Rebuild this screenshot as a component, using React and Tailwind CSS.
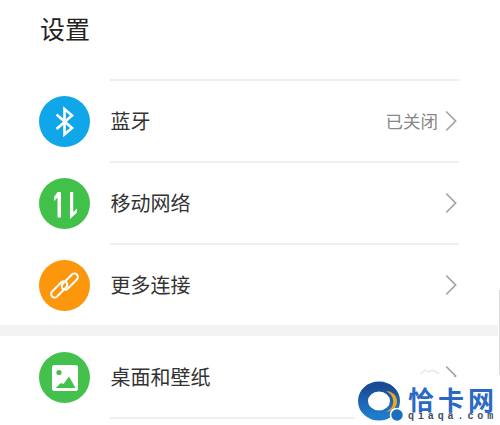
import React from "react";

const font = "font-['Noto_Sans_CJK_SC','Noto_Sans',sans-serif]";

function Chevron() {
  return (
    <svg width="12" height="22" viewBox="0 0 12 22" fill="none" stroke="#a3a3a3" strokeWidth="1.7" className="mr-[2px] -mt-[1px]">
      <path d="M1.2 1.5 L10.6 11 L1.2 20.5" />
    </svg>
  );
}

function Row({ color, icon, label, status, last, first }) {
  return (
    <div className={`flex ${first ? "h-[83px]" : "h-[82px]"}`}>
      <div className={`w-[110px] flex items-center pl-[39px] ${first ? "" : "pt-[2px]"}`}>
        <div className={`w-[51px] h-[51px] rounded-full flex items-center justify-center ${color}`}>
          {icon}
        </div>
      </div>
      <div className={`w-[349px] flex items-center pl-[0.5px] border-[#efefef] ${first ? "" : "border-t-2"} ${last ? "border-b-2" : ""}`}>
        <span className="text-[20px] leading-none text-[#333333]">{label}</span>
        <div className="ml-auto flex items-center text-[#888888]">
          {status}
          <Chevron />
        </div>
      </div>
    </div>
  );
}

function BluetoothIcon() {
  return (
    <svg width="51" height="51" viewBox="0 0 51 51" fill="none" stroke="white" strokeWidth="2.6">
      <path d="M17.5 18.5 L33 32 L25.5 38.5 V13 L33 19.5 L17.5 33" />
    </svg>
  );
}

function UpDown() {
  return (
    <svg width="51" height="51" viewBox="0 0 51 51" fill="white">
      <path d="M18.5 14 H22 V39.5 H18.5 V19.5 L15 23 V19 Z" />
      <path d="M31 14 H34.2 V34 L38 30.5 V34.5 L31 41 Z" />
    </svg>
  );
}

function Clip() {
  return (
    <svg width="51" height="51" viewBox="0 0 51 51" fill="none" stroke="white" strokeWidth="2">
      <g transform="rotate(45 25.5 25.5)">
        <rect x="23" y="9" width="7" height="20" rx="3.5" />
        <rect x="21" y="22" width="7" height="20" rx="3.5" />
      </g>
    </svg>
  );
}

function Picture() {
  return (
    <svg width="51" height="51" viewBox="0 0 51 51">
      <rect x="13" y="13" width="26" height="26" rx="2.5" fill="white" />
      <circle cx="20" cy="20.5" r="2.6" fill="#43c14c" />
      <path d="M16.5 36 L22 31 L24.5 32 L30 24.5 L36.5 36 Z" fill="#43c14c" />
    </svg>
  );
}

function Watermark() {
  return (
    <div className="absolute right-0 bottom-0 w-[145px] h-[48px] bg-white flex pl-[2px]">
      <svg width="51" height="46" viewBox="0 0 51 46" className="shrink-0 mt-[4px]">
        <defs>
          <linearGradient id="ring" x1="0" y1="0" x2="0" y2="1">
            <stop offset="0" stopColor="#1a4a96" />
            <stop offset="1" stopColor="#1e7ccb" />
          </linearGradient>
        </defs>
        <ellipse cx="22" cy="20" rx="16" ry="14.5" fill="none" stroke="url(#ring)" strokeWidth="10" />
        <path d="M29 10 A11 10.5 0 0 1 29 31 A14 12 0 0 0 29 10 Z" fill="#f0a91f" />
        <circle cx="40" cy="34" r="6.5" fill="#1c6fbe" stroke="white" strokeWidth="1.5" />
      </svg>
      <div className="flex flex-col pt-[9px]">
        <span className="text-[26px] leading-[26px] font-bold text-[#2a69c4] whitespace-nowrap tracking-[4px]">恰卡网</span>
        <span className="text-[10px] leading-[10px] font-bold text-[#3c4f66] tracking-[3.9px] whitespace-nowrap font-['Liberation_Mono',monospace]">qiaqa.com</span>
      </div>
    </div>
  );
}

export default function App() {
  return (
    <div className={`relative w-[500px] h-[425px] overflow-hidden bg-white ${font}`}>
      <div className="h-[79px] pl-[40px] pt-[10px]">
        <h1 className="text-[25px] leading-[36px] font-normal text-[#222222]">设置</h1>
      </div>
      <Row
        color="bg-[#0fa7ea]"
        icon={<BluetoothIcon />}
        label="蓝牙"
        status={<span className="text-[17.5px] leading-none mr-[7px]">已关闭</span>}
      />
      <Row color="bg-[#41c149]" icon={<UpDown />} label="移动网络" />
      <Row color="bg-[#fb960d]" icon={<Clip />} label="更多连接" />
      <div className="h-[11px] mr-[2px] bg-[#f3f3f3]" />
      <Row
        color="bg-[#43c14c]"
        icon={<Picture />}
        label="桌面和壁纸"
        status={
          <svg width="20" height="8" viewBox="0 0 20 8" fill="none" stroke="#e8e8e8" strokeWidth="1.5" className="mr-[5px] -mt-[12px]">
            <path d="M1 7 Q5 1 9 5 Q13 1 19 7" />
          </svg>
        }
        first
        last
      />
      <div className="absolute right-0 top-[290px] w-px h-[85px] bg-[#dddddd]" />
      <Watermark />
    </div>
  );
}
